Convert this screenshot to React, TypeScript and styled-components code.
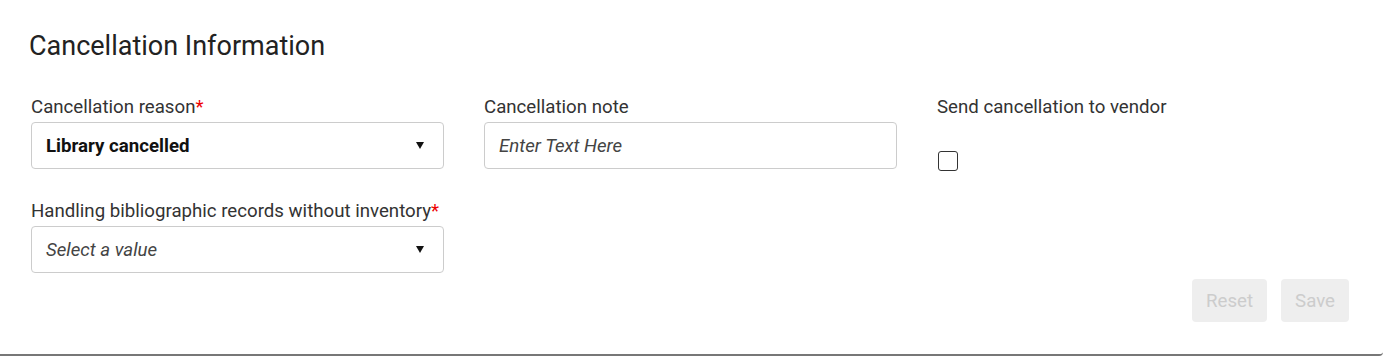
import React from 'react'
import styled, { createGlobalStyle } from 'styled-components'

const Global = createGlobalStyle`
  body {
    margin: 0;
    background: #fff;
    font-family: Roboto, "Liberation Sans", sans-serif;
  }
`

const Caret = () => (
  <svg width="8" height="7" viewBox="0 0 8 7">
    <path d="M0 0 H8 L4 7 Z" fill="#111" />
  </svg>
)

const App = () => {
  return (
    <>
      <Global />
      <Panel>
        <Title>Cancellation Information</Title>
        <Form>
          <Field>
            <Label>Cancellation reason<Req>*</Req></Label>
            <Select>
              <Value bold>Library cancelled</Value>
              <Caret />
            </Select>
          </Field>
          <Field>
            <Label>Cancellation note</Label>
            <TextBox placeholder="Enter Text Here" />
          </Field>
          <Field>
            <Label>Send cancellation to vendor</Label>
            <Check />
          </Field>
          <Field>
            <Label>Handling bibliographic records without inventory<Req>*</Req></Label>
            <Select>
              <Value>Select a value</Value>
              <Caret />
            </Select>
          </Field>
        </Form>
        <Actions>
          <Button>Reset</Button>
          <Button>Save</Button>
        </Actions>
      </Panel>
    </>
  )
}

export default App

const Panel = styled.div`
    height: 356px;
    box-sizing: border-box;
    padding: 30px 34px 0 29px;
    border-bottom: 2px solid #777;
    border-bottom-right-radius: 4px;
    display: flex;
    flex-direction: column;
`
const Title = styled.h2`
    margin: 0;
    font-size: 27px;
    font-weight: 400;
    color: #222;
    line-height: 32px;
`
const Form = styled.div`
    display: grid;
    grid-template-columns: repeat(3, 413px);
    column-gap: 40px;
    row-gap: 30px;
    margin-top: 35px;
    padding-left: 2px;
`
const Field = styled.div`
    display: flex;
    flex-direction: column;
`
const Label = styled.div`
    font-size: 14pt;
    line-height: 20px;
    color: #333;
    margin-bottom: 5px;
    white-space: nowrap;
`
const Req = styled.span`
    color: #e00;
`
const Select = styled.div`
    height: 47px;
    box-sizing: border-box;
    border: 1px solid #ccc;
    border-radius: 4px;
    display: flex;
    align-items: center;
    justify-content: space-between;
    padding: 0 19px 0 14px;
`
const Value = styled.span<{ bold?: boolean }>`
    font-size: 14pt;
    font-weight: ${p => (p.bold ? 700 : 400)};
    font-style: ${p => (p.bold ? 'normal' : 'italic')};
    color: ${p => (p.bold ? '#111' : '#444')};
`
const TextBox = styled.input`
    height: 47px;
    box-sizing: border-box;
    border: 1px solid #ccc;
    border-radius: 4px;
    padding: 0 14px;
    font-family: Roboto, "Liberation Sans", sans-serif;
    font-size: 14pt;
    outline: none;
    &::placeholder {
        color: #444;
        font-style: italic;
    }
`
const Check = styled.div`
    width: 18px;
    height: 18px;
    border: 1.5px solid #333;
    border-radius: 3px;
    margin-top: 29px;
    margin-left: 1px;
`
const Actions = styled.div`
    display: flex;
    justify-content: flex-end;
    gap: 14px;
    margin-top: 6px;
`
const Button = styled.button`
    height: 43px;
    padding: 0 14px;
    border: none;
    border-radius: 4px;
    background: #eee;
    color: #ccc;
    font-family: Roboto, "Liberation Sans", sans-serif;
    font-size: 14pt;
`
